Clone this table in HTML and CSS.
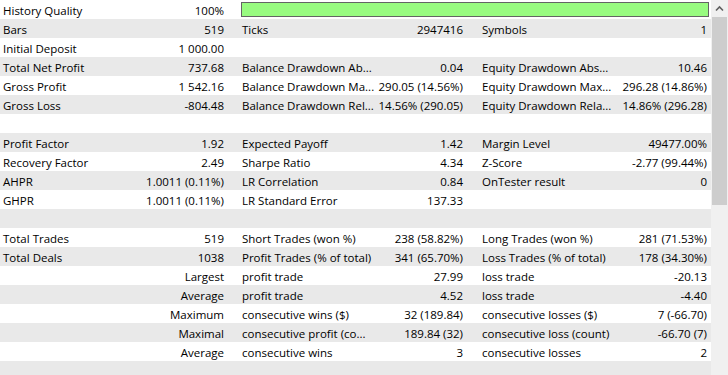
FILE: index.html
```html
<!DOCTYPE html>
<html>
<head>
<meta charset="utf-8">
<link rel="stylesheet" href="styles.css">
</head>
<body>
<div class="wrap">
  <div class="table">
    <div class="row">
      <div class="blk b1"><span class="lab">History Quality</span><span class="val">100%</span></div>
      <div class="quality"><div class="qbar"></div></div>
    </div>
    <div class="row">
      <div class="blk b1"><span class="lab">Bars</span><span class="val">519</span></div>
      <div class="blk b2"><span class="lab">Ticks</span><span class="val">2947416</span></div>
      <div class="blk b3"><span class="lab">Symbols</span><span class="val">1</span></div>
    </div>
    <div class="row">
      <div class="blk b1"><span class="lab">Initial Deposit</span><span class="val">1 000.00</span></div>
      <div class="blk b2"></div>
      <div class="blk b3"></div>
    </div>
    <div class="row">
      <div class="blk b1"><span class="lab">Total Net Profit</span><span class="val">737.68</span></div>
      <div class="blk b2"><span class="lab">Balance Drawdown Ab...</span><span class="val">0.04</span></div>
      <div class="blk b3"><span class="lab">Equity Drawdown Abs...</span><span class="val">10.46</span></div>
    </div>
    <div class="row">
      <div class="blk b1"><span class="lab">Gross Profit</span><span class="val">1 542.16</span></div>
      <div class="blk b2"><span class="lab">Balance Drawdown Ma...</span><span class="val">290.05 (14.56%)</span></div>
      <div class="blk b3"><span class="lab">Equity Drawdown Max...</span><span class="val">296.28 (14.86%)</span></div>
    </div>
    <div class="row">
      <div class="blk b1"><span class="lab">Gross Loss</span><span class="val">-804.48</span></div>
      <div class="blk b2"><span class="lab">Balance Drawdown Rel...</span><span class="val">14.56% (290.05)</span></div>
      <div class="blk b3"><span class="lab">Equity Drawdown Rela...</span><span class="val">14.86% (296.28)</span></div>
    </div>
    <div class="row"></div>
    <div class="row">
      <div class="blk b1"><span class="lab">Profit Factor</span><span class="val">1.92</span></div>
      <div class="blk b2"><span class="lab">Expected Payoff</span><span class="val">1.42</span></div>
      <div class="blk b3"><span class="lab">Margin Level</span><span class="val">49477.00%</span></div>
    </div>
    <div class="row">
      <div class="blk b1"><span class="lab">Recovery Factor</span><span class="val">2.49</span></div>
      <div class="blk b2"><span class="lab">Sharpe Ratio</span><span class="val">4.34</span></div>
      <div class="blk b3"><span class="lab">Z-Score</span><span class="val">-2.77 (99.44%)</span></div>
    </div>
    <div class="row">
      <div class="blk b1"><span class="lab">AHPR</span><span class="val">1.0011 (0.11%)</span></div>
      <div class="blk b2"><span class="lab">LR Correlation</span><span class="val">0.84</span></div>
      <div class="blk b3"><span class="lab">OnTester result</span><span class="val">0</span></div>
    </div>
    <div class="row">
      <div class="blk b1"><span class="lab">GHPR</span><span class="val">1.0011 (0.11%)</span></div>
      <div class="blk b2"><span class="lab">LR Standard Error</span><span class="val">137.33</span></div>
      <div class="blk b3"></div>
    </div>
    <div class="row"></div>
    <div class="row">
      <div class="blk b1"><span class="lab">Total Trades</span><span class="val">519</span></div>
      <div class="blk b2"><span class="lab">Short Trades (won %)</span><span class="val">238 (58.82%)</span></div>
      <div class="blk b3"><span class="lab">Long Trades (won %)</span><span class="val">281 (71.53%)</span></div>
    </div>
    <div class="row">
      <div class="blk b1"><span class="lab">Total Deals</span><span class="val">1038</span></div>
      <div class="blk b2"><span class="lab">Profit Trades (% of total)</span><span class="val">341 (65.70%)</span></div>
      <div class="blk b3"><span class="lab">Loss Trades (% of total)</span><span class="val">178 (34.30%)</span></div>
    </div>
    <div class="row">
      <div class="blk b1"><span class="lab"></span><span class="val">Largest</span></div>
      <div class="blk b2"><span class="lab">profit trade</span><span class="val">27.99</span></div>
      <div class="blk b3"><span class="lab">loss trade</span><span class="val">-20.13</span></div>
    </div>
    <div class="row">
      <div class="blk b1"><span class="lab"></span><span class="val">Average</span></div>
      <div class="blk b2"><span class="lab">profit trade</span><span class="val">4.52</span></div>
      <div class="blk b3"><span class="lab">loss trade</span><span class="val">-4.40</span></div>
    </div>
    <div class="row">
      <div class="blk b1"><span class="lab"></span><span class="val">Maximum</span></div>
      <div class="blk b2"><span class="lab">consecutive wins ($)</span><span class="val">32 (189.84)</span></div>
      <div class="blk b3"><span class="lab">consecutive losses ($)</span><span class="val">7 (-66.70)</span></div>
    </div>
    <div class="row">
      <div class="blk b1"><span class="lab"></span><span class="val">Maximal</span></div>
      <div class="blk b2"><span class="lab">consecutive profit (co...</span><span class="val">189.84 (32)</span></div>
      <div class="blk b3"><span class="lab">consecutive loss (count)</span><span class="val">-66.70 (7)</span></div>
    </div>
    <div class="row">
      <div class="blk b1"><span class="lab"></span><span class="val">Average</span></div>
      <div class="blk b2"><span class="lab">consecutive wins</span><span class="val">3</span></div>
      <div class="blk b3"><span class="lab">consecutive losses</span><span class="val">2</span></div>
    </div>
    <div class="row"></div>
  </div>
  <div class="scrollbar">
    <div class="arrow">
      <svg width="17" height="17" viewBox="0 0 17 17"><polyline points="5,10.5 8.5,7 12,10.5" fill="none" stroke="#606060" stroke-width="1.6"/></svg>
    </div>
    <div class="thumb"></div>
  </div>
</div>
</body>
</html>
```

FILE: styles.css
```css
html, body {
  margin: 0;
  padding: 0;
  background: #ffffff;
  overflow: hidden;
}
.wrap {
  display: flex;
  width: 728px;
  height: 375px;
  overflow: hidden;
}
.table {
  width: 711px;
  display: flex;
  flex-direction: column;
  font-family: "Open Sans", "Liberation Sans", Arial, sans-serif;
  font-size: 11.5px;
  color: #000000;
}
.row {
  display: flex;
  height: 19px;
  flex: none;
  line-height: 19px;
  background: #ffffff;
}
.row:nth-child(even) {
  background: #e9e9e9;
}
.blk {
  display: flex;
  justify-content: space-between;
  white-space: nowrap;
}
.lab, .val {
  padding-top: 1px;
}
.b1 {
  width: 240px;
  padding: 0 16px 0 3px;
  box-sizing: border-box;
}
.b2 {
  width: 240px;
  padding: 0 17px 0 2px;
  box-sizing: border-box;
}
.b3 {
  width: 231px;
  padding: 0 4px 0 2px;
  box-sizing: border-box;
}
.quality {
  width: 471px;
  padding: 2px 2px 2px 1px;
  box-sizing: border-box;
}
.qbar {
  height: 15px;
  background: #98fb80;
  border: 1px solid #646464;
  box-sizing: border-box;
}
.scrollbar {
  width: 17px;
  height: 375px;
  background: #f0f0f0;
  display: flex;
  flex-direction: column;
  align-items: center;
}
.arrow {
  width: 17px;
  height: 17px;
  display: flex;
}
.thumb {
  width: 15px;
  height: 188px;
  background: #cdcdcd;
}
```
